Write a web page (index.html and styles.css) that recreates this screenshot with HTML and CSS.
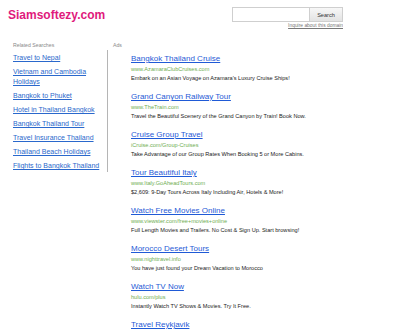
FILE: index.html
```html
<!DOCTYPE html>
<html>
<head>
<meta charset="utf-8">
<link rel="stylesheet" href="styles.css">
</head>
<body>
<div class="page">
  <header class="header">
    <div class="logo">Siamsoftezy.com</div>
    <div class="search">
      <div class="search-row">
        <input class="search-input" type="text">
        <button class="search-btn">Search</button>
      </div>
      <a class="inquire" href="#">Inquire about this domain</a>
    </div>
  </header>
  <main class="main">
    <section class="related">
      <div class="label">Related Searches</div>
      <ul class="rel-list">
        <li><a href="#">Travel to Nepal</a></li>
        <li><a href="#">Vietnam and Cambodia Holidays</a></li>
        <li><a href="#">Bangkok to Phuket</a></li>
        <li><a href="#">Hotel in Thailand Bangkok</a></li>
        <li><a href="#">Bangkok Thailand Tour</a></li>
        <li><a href="#">Travel Insurance Thailand</a></li>
        <li><a href="#">Thailand Beach Holidays</a></li>
        <li><a href="#">Flights to Bangkok Thailand</a></li>
      </ul>
    </section>
    <section class="ads">
      <div class="label">Ads</div>
      <div class="ad-list">
        <div class="ad">
          <a class="ad-title" href="#">Bangkok Thailand Cruise</a>
          <div class="ad-url">www.AzamaraClubCruises.com</div>
          <div class="ad-desc">Embark on an Asian Voyage on Azamara's Luxury Cruise Ships!</div>
        </div>
        <div class="ad">
          <a class="ad-title" href="#">Grand Canyon Railway Tour</a>
          <div class="ad-url">www.TheTrain.com</div>
          <div class="ad-desc">Travel the Beautiful Scenery of the Grand Canyon by Train! Book Now.</div>
        </div>
        <div class="ad">
          <a class="ad-title" href="#">Cruise Group Travel</a>
          <div class="ad-url">iCruise.com/Group-Cruises</div>
          <div class="ad-desc">Take Advantage of our Group Rates When Booking 5 or More Cabins.</div>
        </div>
        <div class="ad">
          <a class="ad-title" href="#">Tour Beautiful Italy</a>
          <div class="ad-url">www.Italy.GoAheadTours.com</div>
          <div class="ad-desc">$2,609: 9-Day Tours Across Italy Including Air, Hotels &amp; More!</div>
        </div>
        <div class="ad">
          <a class="ad-title" href="#">Watch Free Movies Online</a>
          <div class="ad-url">www.viewster.com/free+movies+online</div>
          <div class="ad-desc">Full Length Movies and Trailers. No Cost &amp; Sign Up. Start browsing!</div>
        </div>
        <div class="ad">
          <a class="ad-title" href="#">Morocco Desert Tours</a>
          <div class="ad-url">www.nighttravel.info</div>
          <div class="ad-desc">You have just found your Dream Vacation to Morocco</div>
        </div>
        <div class="ad">
          <a class="ad-title" href="#">Watch TV Now</a>
          <div class="ad-url">hulu.com/plus</div>
          <div class="ad-desc">Instantly Watch TV Shows &amp; Movies. Try It Free.</div>
        </div>
        <div class="ad">
          <a class="ad-title" href="#">Travel Reykjavik</a>
        </div>
      </div>
    </section>
  </main>
</div>
</body>
</html>
```
FILE: styles.css
```css
html, body {
  margin: 0;
  padding: 0;
  background: #ffffff;
  font-family: "Liberation Sans", Arial, sans-serif;
}

.page {
  width: 335px;
  padding-left: 8px;
  overflow: hidden;
  height: 335px;
}

.header {
  display: flex;
  justify-content: space-between;
  align-items: flex-start;
  padding-top: 7px;
}

.logo {
  font-size: 12px;
  font-weight: bold;
  line-height: 16px;
  color: #e01a7c;
}

.search {
  display: flex;
  flex-direction: column;
  align-items: flex-end;
}

.search-row {
  display: flex;
}

.search-input {
  box-sizing: border-box;
  width: 77px;
  height: 15px;
  margin: 0;
  padding: 0;
  border: 1px solid #cfcfcf;
  border-right: none;
  background: #fff;
}

.search-btn {
  box-sizing: border-box;
  width: 34px;
  height: 15px;
  margin: 0;
  padding: 0;
  border: 1px solid #cfcfcf;
  background: linear-gradient(#f7f7f7, #e3e3e3);
  font-family: "Liberation Sans", Arial, sans-serif;
  font-size: 5.6px;
  color: #333;
}

.inquire {
  font-size: 4.9px;
  line-height: 7px;
  color: #777;
  text-decoration: underline;
}

.main {
  display: flex;
  margin-top: 12px;
  padding-left: 5px;
}

.label {
  font-size: 5.2px;
  line-height: 8px;
  color: #8a8a8a;
}

.related {
  width: 95px;
  flex: none;
}

.rel-list {
  list-style: none;
  margin: 1px 0 0 0;
  padding: 3px 6px 1px 0;
  border-right: 1px solid #b5b5b5;
}

.rel-list li {
  font-size: 7px;
  line-height: 10px;
  margin-bottom: 4px;
}

.rel-list li:last-child {
  margin-bottom: 0;
}

.rel-list a {
  color: #2a68cc;
  text-decoration: underline;
}

.ads {
  margin-left: 5px;
  flex: 1;
}

.ad-list {
  padding: 4px 0 0 18px;
}

.ad {
  margin-bottom: 9px;
}

.ad-title {
  display: block;
  font-size: 8px;
  line-height: 11px;
  color: #1f5ad6;
  text-decoration: underline;
  white-space: nowrap;
}

.ad-url {
  font-size: 5.6px;
  line-height: 10px;
  color: #6fae52;
  white-space: nowrap;
}

.ad-desc {
  font-size: 5.6px;
  line-height: 8px;
  color: #222;
  white-space: nowrap;
}
```
